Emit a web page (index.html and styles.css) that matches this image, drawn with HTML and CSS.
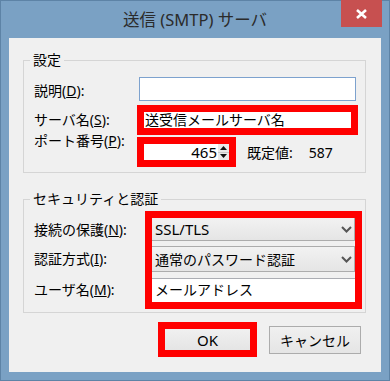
FILE: index.html
```html
<!DOCTYPE html>
<html lang="ja">
	<head>
		<meta charset="UTF-8" />
		<title>送信 (SMTP) サーバ</title>
		<link rel="stylesheet" href="styles.css">
	</head>
	<body>
		<div class="window">
			<div class="titlebar">
				<span></span>
				<h1 class="title">送信 (SMTP) サーバ</h1>
				<button class="close" aria-label="閉じる">
					<svg width="11" height="10" viewBox="0 0 11 10">
						<path d="M1 1 L10 9 M10 1 L1 9" stroke="#fff" stroke-width="2.6" fill="none" />
					</svg>
				</button>
			</div>

			<div class="client">
				<fieldset class="group group-settings">
					<legend>設定</legend>

					<div class="row row-desc">
						<label class="label">説明(<u>D</u>):</label>
						<div class="textbox textbox-focus"></div>
					</div>

					<div class="row row-server">
						<label class="label">サーバ名(<u>S</u>):</label>
						<div class="mark mark-server">
							<div class="field">送受信メールサーバ名</div>
						</div>
					</div>

					<div class="row row-port">
						<label class="label label-port">ポート番号(<u>P</u>):</label>
						<div class="mark mark-port">
							<div class="field field-port">
								<span class="num">465</span>
								<span class="spin">
									<span class="spin-btn">
										<svg width="7" height="4" viewBox="0 0 7 4"><path d="M0 4 L3.5 0 L7 4 Z" fill="#111" /></svg>
									</span>
									<span class="spin-btn">
										<svg width="7" height="4" viewBox="0 0 7 4"><path d="M0 0 L7 0 L3.5 4 Z" fill="#111" /></svg>
									</span>
								</span>
							</div>
						</div>
						<span class="default-port">既定値:</span>
						<span class="default-value">587</span>
					</div>
				</fieldset>

				<fieldset class="group group-security">
					<legend>セキュリティと認証</legend>

					<div class="security">
						<div class="labels">
							<label class="label l-conn">接続の保護(<u>N</u>):</label>
							<label class="label l-auth">認証方式(<u>I</u>):</label>
							<label class="label l-user">ユーザ名(<u>M</u>):</label>
						</div>

						<div class="mark mark-security">
							<div class="combo combo-conn">
								<span>SSL/TLS</span>
								<svg class="chevron" width="11" height="7" viewBox="0 0 11 7"><path d="M1 1 L5.5 5.5 L10 1" stroke="#555" stroke-width="2" fill="none" /></svg>
							</div>
							<div class="combo combo-auth">
								<span>通常のパスワード認証</span>
								<svg class="chevron" width="11" height="7" viewBox="0 0 11 7"><path d="M1 1 L5.5 5.5 L10 1" stroke="#555" stroke-width="2" fill="none" /></svg>
							</div>
							<div class="user-box">メールアドレス</div>
						</div>
					</div>
				</fieldset>

				<div class="buttons">
					<div class="mark mark-ok">
						<button class="btn btn-ok">OK</button>
					</div>
					<button class="btn btn-cancel">キャンセル</button>
				</div>
			</div>
		</div>
	</body>
</html>
```

FILE: styles.css
```css
:root {
	--frame: #7aa1c4;
	--frame-dark: #5d83a6;
	--client-bg: #f0f0f0;
	--group-line: #d5d5d5;
	--mark: #ff0000;
	--control-line: #acacac;
	--text: #000;
}

* {
	box-sizing: border-box;
}

body {
	margin: 0;
	width: 390px;
	height: 381px;
	overflow: hidden;
	font-family: "Noto Sans", "Noto Sans CJK JP", sans-serif;
	font-size: 14px;
	color: var(--text);
}

.window {
	width: 390px;
	height: 381px;
	background: var(--frame);
	border: 1px solid var(--frame-dark);
	display: flex;
	flex-direction: column;
}

/* Title bar */
.titlebar {
	height: 37px;
	display: grid;
	grid-template-columns: 1fr auto 1fr;
	align-items: center;
}

.title {
	margin: 0;
	font-size: 16.5px;
	font-weight: 400;
	color: #2b2b2b;
	line-height: 20px;
	padding-top: 1px;
	white-space: nowrap;
}

.close {
	justify-self: end;
	align-self: start;
	margin: -1px 7px 0 0;
	width: 41px;
	height: 27px;
	border: none;
	padding: 0;
	background: #c75050;
	display: flex;
	align-items: center;
	justify-content: center;
}

/* Client area */
.client {
	margin: 0 8px;
	height: 334px;
	background: var(--client-bg);
	padding: 0 15px 0 14px;
	display: flex;
	flex-direction: column;
}

.group {
	margin: 0;
	border: 1px solid var(--group-line);
	min-inline-size: 0;
}

.group legend {
	font-size: 14px;
	line-height: 18px;
	padding: 0 3px;
	margin-left: -4px;
}

.group-settings {
	margin-top: 13px;
	padding: 8px 1px 5px 10px;
}

.group-security {
	margin-top: 17px;
	padding: 3px 3px 3px 10px;
}

.row {
	display: flex;
	align-items: center;
}

.row-desc {
	height: 24px;
}

.row-server {
	height: 30px;
	margin-top: 4px;
}

.row-port {
	height: 30px;
	margin-top: 2px;
}

.label {
	line-height: 20px;
	white-space: nowrap;
}

.group-settings .label {
	width: 103px;
	flex: none;
}

.row-desc .label {
	margin-top: 3px;
}

.label-port {
	align-self: flex-start;
	margin-top: -6px;
}

.label u {
	text-underline-offset: 1px;
}

.textbox {
	width: 217px;
	height: 24px;
	margin-left: 2px;
	background: #fff;
	border: 1px solid #abadb3;
}

.textbox-focus {
	border-color: #7da2ce;
}

/* Red highlight frames */
.mark {
	border: 7px solid var(--mark);
	background: #fff;
}

.mark-server {
	width: 221px;
	height: 30px;
}

.mark-port {
	width: 99px;
	height: 30px;
}

.field {
	height: 16px;
	line-height: 16px;
	padding-left: 1px;
	white-space: nowrap;
}

.field-port {
	display: flex;
	padding: 0;
}

.num {
	flex: 1;
	text-align: right;
	padding-right: 1px;
	font-size: 15px;
}

.spin {
	width: 11px;
	display: flex;
	flex-direction: column;
	background: #e9e9e9;
}

.spin-btn {
	flex: 1;
	display: flex;
	align-items: center;
	justify-content: center;
}

.spin-btn + .spin-btn {
	border-top: 1px solid #c9c9c9;
}

.default-port {
	margin-left: 11px;
	white-space: nowrap;
}

.default-value {
	margin-left: 16px;
}

/* Security group */
.security {
	display: flex;
}

.labels {
	width: 111px;
	flex: none;
	padding-top: 7px;
	display: flex;
	flex-direction: column;
}

.labels .label {
	display: flex;
	align-items: center;
}

.l-conn {
	height: 23px;
}

.l-auth {
	height: 26px;
	margin-top: 5px;
}

.l-user {
	height: 24px;
	margin-top: 6px;
}

.mark-security {
	width: 217px;
	height: 98px;
	background: var(--client-bg);
	display: flex;
	flex-direction: column;
}

.combo {
	display: flex;
	align-items: center;
	justify-content: space-between;
	padding: 0 2px 0 3px;
	background: linear-gradient(#f2f2f2, #e5e5e5);
	border-right: 1px solid var(--control-line);
	border-bottom: 1px solid var(--control-line);
	white-space: nowrap;
}

.combo-conn {
	height: 23px;
	font-size: 15px;
}

.combo-auth {
	height: 26px;
	margin-top: 5px;
	border-top: 1px solid var(--control-line);
}

.user-box {
	height: 24px;
	margin-top: 6px;
	background: #fff;
	border-top: 1px solid #abadb3;
	padding-left: 3px;
	line-height: 22px;
}

/* Buttons */
.buttons {
	margin: 9px 5px 0 0;
	display: flex;
	justify-content: flex-end;
	align-items: center;
	gap: 12px;
}

.mark-ok {
	width: 99px;
	height: 35px;
}

.btn {
	font-family: inherit;
	font-size: 14px;
	color: var(--text);
	background: linear-gradient(#f0f0f0, #e5e5e5);
	padding: 0;
}

.btn-ok {
	width: 100%;
	height: 100%;
	border: none;
	font-size: 15px;
}

.btn-cancel {
	width: 92px;
	height: 28px;
	border: 1px solid var(--control-line);
}
```
